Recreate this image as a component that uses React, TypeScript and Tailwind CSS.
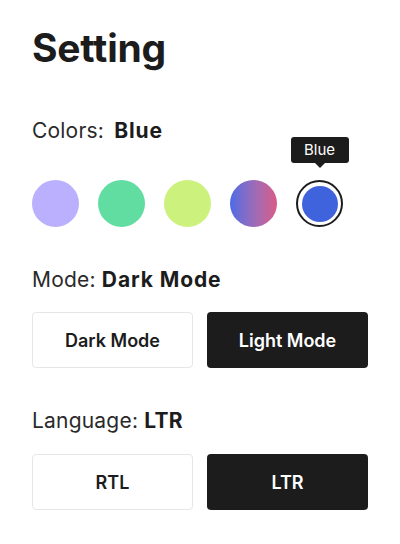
import React from "react";

const font = { fontFamily: "Inter, 'Noto Sans', sans-serif" };

export default function App() {
  const swatches = [
    { name: "Purple", cls: "bg-[#bab0fd]" },
    { name: "Green", cls: "bg-[#61dda2]" },
    { name: "Lime", cls: "bg-[#ccf27d]" },
    { name: "Gradient", cls: "bg-gradient-to-r from-[#4a6ae6] to-[#d95a88]" },
  ];
  return (
    <div className="w-[400px] h-[544px] bg-white text-[#1c1c1c] px-8 pt-[24px]" style={font}>
      <h1 className="text-[39px] leading-[48px] font-bold tracking-[-0.2px]">Setting</h1>

      <div className="mt-[46px] text-[21px] leading-[26px] text-[#2a2a2a] tracking-[0.2px]">
        Colors: <span className="font-bold text-[#1c1c1c] ml-1 tracking-[0.9px]">Blue</span>
      </div>
      <div className="mt-[36px] flex gap-[19px] items-center">
        {swatches.map((s) => (
          <div key={s.name} className={`w-[47px] h-[47px] rounded-full ${s.cls}`} />
        ))}
        <div className="relative w-[47px] h-[47px] rounded-full border-2 border-[#1c1c1c] flex items-center justify-center">
          <div className="w-[36px] h-[36px] rounded-full bg-[#3e63dd]" />
          <div className="absolute left-1/2 -translate-x-1/2 bottom-[62px] bg-[#1c1c1c] text-white text-[15px] leading-[26px] w-[58px] text-center rounded-[3px]">
            Blue
            <div className="absolute left-1/2 -translate-x-1/2 top-full w-0 h-0 border-l-[5px] border-r-[5px] border-t-[5px] border-l-transparent border-r-transparent border-t-[#1c1c1c]" />
          </div>
        </div>
      </div>

      <div className="mt-[40px] text-[21px] leading-[26px] text-[#2a2a2a] tracking-[0.2px]">
        Mode: <span className="font-bold text-[#1c1c1c] tracking-[0.9px]">Dark Mode</span>
      </div>
      <div className="mt-[19px] grid grid-cols-2 gap-[14px]">
        <button className="h-[56px] rounded-[4px] border border-[#e6e6e6] bg-white text-[18px] font-semibold text-[#1c1c1c]">
          Dark Mode
        </button>
        <button className="h-[56px] rounded-[4px] bg-[#1c1c1c] text-[18px] font-semibold text-white">
          Light Mode
        </button>
      </div>

      <div className="mt-[40px] text-[21px] leading-[26px] text-[#2a2a2a] tracking-[0.2px]">
        Language: <span className="font-bold text-[#1c1c1c]">LTR</span>
      </div>
      <div className="mt-[20px] grid grid-cols-2 gap-[14px]">
        <button className="h-[56px] rounded-[4px] border border-[#e6e6e6] bg-white text-[18px] font-semibold text-[#1c1c1c]">
          RTL
        </button>
        <button className="h-[56px] rounded-[4px] bg-[#1c1c1c] text-[18px] font-semibold text-white">
          LTR
        </button>
      </div>
    </div>
  );
}
